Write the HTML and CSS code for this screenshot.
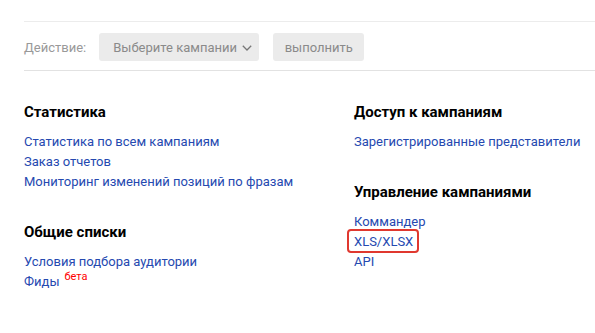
FILE: index.html
```html
<!DOCTYPE html>
<html>
<head>
<meta charset="utf-8">
<link rel="stylesheet" href="styles.css">
</head>
<body>
<div class="page">
  <div class="toolbar">
    <span class="label">Действие:</span>
    <button class="btn select">Выберите кампании<svg class="chev" width="10" height="6" viewBox="0 0 10 6"><path d="M0.8 0.8l4.2 4.2 4.2-4.2" fill="none" stroke="#777" stroke-width="1.3"/></svg></button>
    <button class="btn run">выполнить</button>
  </div>
  <div class="columns">
    <div class="col left">
      <div class="section">
        <h3 class="title">Статистика</h3>
        <a class="link" href="#">Статистика по всем кампаниям</a>
        <a class="link" href="#">Заказ отчетов</a>
        <a class="link" href="#">Мониторинг изменений позиций по фразам</a>
      </div>
      <div class="section">
        <h3 class="title">Общие списки</h3>
        <a class="link" href="#">Условия подбора аудитории</a>
        <div class="row"><a class="link inline" href="#">Фиды</a><sup class="beta">бета</sup></div>
      </div>
    </div>
    <div class="col right">
      <div class="section">
        <h3 class="title">Доступ к кампаниям</h3>
        <a class="link" href="#">Зарегистрированные представители</a>
      </div>
      <div class="section">
        <h3 class="title">Управление кампаниями</h3>
        <a class="link" href="#">Коммандер</a>
        <div class="row"><a class="link inline boxed" href="#">XLS/XLSX</a></div>
        <a class="link" href="#">API</a>
      </div>
    </div>
  </div>
</div>
</body>
</html>
```
FILE: styles.css
```css
html, body {
  margin: 0;
  padding: 0;
  background: #fff;
}
body {
  font-family: Roboto, "Noto Sans", Arial, sans-serif;
  font-size: 13px;
  color: #000;
}
.page {
  padding: 21px 0 0 24px;
}
.toolbar {
  display: flex;
  align-items: center;
  border-top: 1px solid #ececec;
  border-bottom: 1px solid #e2e2e2;
  padding: 11px 0 9px 0;
}
.label {
  color: #999;
  font-size: 13px;
  margin-right: 13px;
  white-space: nowrap;
}
.btn {
  font-family: inherit;
  font-size: 13px;
  color: #8a8a8a;
  background: #ebebeb;
  border: none;
  border-radius: 3px;
  height: 28px;
  display: inline-flex;
  align-items: center;
  white-space: nowrap;
  padding: 0 14px;
  flex: none;
}
.select {
  width: 160px;
  padding: 0 10px 0 14px;
  margin-right: 14px;
}
.chev {
  flex: none;
  margin-left: 5px;
  margin-top: 1px;
}
.run {
  width: 91px;
  justify-content: center;
  padding: 0;
}
.columns {
  display: flex;
  margin-top: 31px;
}
.col {
  display: flex;
  flex-direction: column;
  gap: 30px;
}
.left {
  width: 330px;
}
.title {
  margin: 0 0 10px 0;
  font-size: 15px;
  font-weight: 700;
  line-height: 20px;
}
.link {
  display: block;
  color: #2549b0;
  text-decoration: none;
  line-height: 20px;
}
.row {
  display: flex;
  align-items: flex-start;
  height: 20px;
}
.inline {
  display: inline-block;
}
.beta {
  color: #f00;
  font-size: 11px;
  line-height: 11px;
  margin-left: 5px;
  margin-top: -1px;
}
.boxed {
  position: relative;
}
.boxed::after {
  content: "";
  position: absolute;
  left: -7px;
  right: -6px;
  top: -3px;
  bottom: -1px;
  border: 2.5px solid #e0382f;
  border-radius: 4px;
}
```
